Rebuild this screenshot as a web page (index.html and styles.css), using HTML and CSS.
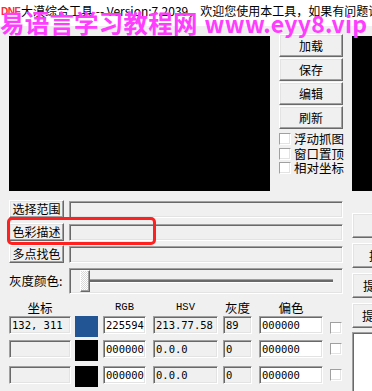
FILE: index.html
```html
<!DOCTYPE html>
<html lang="zh-CN">
<head>
<meta charset="utf-8">
<title>大漠综合工具</title>
<link rel="stylesheet" href="styles.css">
</head>
<body>
<div class="window">
  <div class="titlebar">
    <span class="app-icon">DNF</span>
    <span class="title">大漠综合工具 -- Version:7.2039，欢迎您使用本工具，如果有问题请联系作者</span>
    <div class="watermark"><span class="wm-cn">易语言学习教程网</span><span class="wm-en">www.eyy8.vip</span></div>
  </div>

  <div class="client">
    <div class="top">
      <div class="canvas"></div>
      <div class="side">
        <button class="btn side-btn">加载</button>
        <button class="btn side-btn">保存</button>
        <button class="btn side-btn">编辑</button>
        <button class="btn side-btn">刷新</button>
        <div class="checks">
          <label class="check"><span class="box"></span>浮动抓图</label>
          <label class="check"><span class="box"></span>窗口置顶</label>
          <label class="check"><span class="box"></span>相对坐标</label>
        </div>
      </div>
      <div class="canvas canvas-right"></div>
    </div>

    <div class="bottom">
      <div class="left">
        <div class="row"><button class="btn row-btn">选择范围</button><div class="field wide"></div></div>
        <div class="row"><button class="btn row-btn">色彩描述</button><div class="field wide"></div></div>
        <div class="row"><button class="btn row-btn">多点找色</button><div class="field wide"></div></div>
        <div class="slider-row">
          <span class="slider-label">灰度颜色:</span>
          <div class="slider"><span class="thumb"></span><span class="track"></span></div>
        </div>

        <div class="table">
          <div class="hd col-coord">坐标</div>
          <div class="hd col-swatch"></div>
          <div class="hd hd-latin col-rgb">RGB</div>
          <div class="hd hd-latin col-hsv">HSV</div>
          <div class="hd col-gray">灰度</div>
          <div class="hd col-bias">偏色</div>
          <div class="hd col-chk"></div>

          <div class="field ro col-coord">132, 311</div>
          <div class="swatch col-swatch swatch-blue"></div>
          <div class="field col-rgb">225594</div>
          <div class="field ro col-hsv">213.77.58</div>
          <div class="field ro col-gray">89</div>
          <div class="field col-bias">000000</div>
          <div class="box col-chk cell-chk first-chk"></div>

          <div class="field ro col-coord"></div>
          <div class="swatch col-swatch"></div>
          <div class="field col-rgb">000000</div>
          <div class="field ro col-hsv">0.0.0</div>
          <div class="field ro col-gray">0</div>
          <div class="field col-bias">000000</div>
          <div class="box col-chk cell-chk"></div>

          <div class="field ro col-coord"></div>
          <div class="swatch col-swatch"></div>
          <div class="field col-rgb">000000</div>
          <div class="field ro col-hsv">0.0.0</div>
          <div class="field ro col-gray">0</div>
          <div class="field col-bias">000000</div>
          <div class="box col-chk cell-chk"></div>
        </div>
      </div>

      <div class="right">
        <button class="btn rbtn rbtn-1">取色</button>
        <button class="btn rbtn rbtn-2">提取坐标</button>
        <button class="btn rbtn rbtn-3">提取颜色</button>
        <button class="btn rbtn rbtn-4">提取描述</button>
        <div class="field listbox"></div>
      </div>
    </div>
  </div>

  <div class="highlight"></div>
</div>
</body>
</html>
```

FILE: styles.css
```css
* { box-sizing: border-box; }

html, body {
  margin: 0;
  padding: 0;
  overflow: hidden;
}

body {
  width: 372px;
  height: 391px;
  background: #f0f0f0;
  font-family: "Noto Sans CJK SC", sans-serif;
  font-size: 12px;
  color: #000;
}

.window {
  position: relative;
  width: 372px;
  height: 391px;
  overflow: hidden;
}

/* ---------- title bar ---------- */
.titlebar {
  position: relative;
  height: 26px;
  background: #fff;
  display: flex;
  align-items: flex-start;
  padding-top: 3px;
  white-space: nowrap;
}

.app-icon {
  width: 20px;
  margin-left: 1px;
  margin-top: 3px;
  font: bold 10px/11px "Liberation Sans", sans-serif;
  color: #ff2a2a;
  letter-spacing: -0.5px;
}

.title {
  margin-left: 1px;
  font-size: 12px;
  line-height: 16px;
}

.watermark {
  position: absolute;
  left: 0;
  top: 10px;
  display: flex;
  align-items: baseline;
  color: #ff3dff;
  font-family: "Noto Sans CJK SC", sans-serif;
  font-weight: bold;
  white-space: nowrap;
  line-height: 26px;
}

.wm-cn {
  font-size: 24.5px;
  letter-spacing: 0.2px;
}

.wm-en {
  font-size: 23px;
  margin-left: 7px;
  letter-spacing: 0.3px;
}

/* ---------- client ---------- */
.client {
  padding: 8px 0 0 9px;
}

.top {
  display: flex;
  height: 157px;
}

.canvas {
  width: 261px;
  height: 155px;
  margin-top: 2px;
  background: #000;
  flex: none;
}

.canvas-right {
  width: 40px;
  margin-left: 9px;
}

.side {
  width: 64px;
  margin-left: 9px;
  display: flex;
  flex-direction: column;
  flex: none;
}

.btn {
  background: #f0f0f0;
  border: 1px solid;
  border-color: #fff #696969 #696969 #fff;
  box-shadow: inset -1px -1px 0 #a0a0a0, inset 1px 1px 0 #e3e3e3;
  font: 12px/14px "Noto Sans CJK SC", sans-serif;
  color: #000;
  display: flex;
  align-items: center;
  justify-content: center;
  padding: 0;
  margin: 0;
  white-space: nowrap;
}

.side-btn {
  height: 23px;
  margin-bottom: 1px;
}

.checks {
  margin-top: 2px;
}

.check {
  display: flex;
  align-items: center;
  height: 14.5px;
  font-size: 12.5px;
  line-height: 14px;
  white-space: nowrap;
}

.box {
  width: 12px;
  height: 12px;
  flex: none;
  background: #fff;
  border: 1px solid;
  border-color: #a0a0a0 #fff #fff #a0a0a0;
  box-shadow: inset -1px -1px 0 #e3e3e3;
}

.check .box {
  margin-right: 3px;
}

/* ---------- lower area ---------- */
.bottom {
  display: flex;
  margin-top: 9px;
}

.left {
  width: 334px;
  flex: none;
  display: flex;
  flex-direction: column;
}

.row {
  display: flex;
  height: 18px;
  margin-bottom: 4.5px;
}

.row-btn {
  width: 55px;
  height: 18px;
}

.field {
  background: #fff;
  border: 1px solid;
  border-color: #a0a0a0 #fff #fff #a0a0a0;
  box-shadow: inset 1px 1px 0 #696969, inset -1px -1px 0 #e3e3e3;
  font: 10.5px/16px "DejaVu Sans Mono", monospace;
  padding-left: 2px;
  white-space: nowrap;
  overflow: hidden;
}

.field.ro,
.wide {
  background: #f0f0f0;
}

.wide {
  width: 274px;
  height: 17px;
  margin: 1px 0 0 5px;
}

.slider-row {
  display: flex;
  align-items: center;
  height: 26px;
}

.slider-label {
  width: 60px;
  white-space: nowrap;
  font-size: 12.5px;
}

.slider {
  width: 274px;
  height: 26px;
  display: flex;
  align-items: center;
  padding: 0 9px 0 10px;
  border: 1px solid;
  border-color: #a0a0a0 #fff #fff #a0a0a0;
  box-shadow: inset 1px 1px 0 #696969, inset -1px -1px 0 #e3e3e3;
}

.thumb {
  width: 10px;
  height: 22px;
  flex: none;
  border: 1px solid;
  border-color: #fff #696969 #696969 #fff;
  box-shadow: inset -1px -1px 0 #a0a0a0;
  background: repeating-conic-gradient(#ffffff 0 25%, #d8d8d8 0 50%) 0 0 / 2px 2px;
}

.track {
  flex: 1;
  height: 2px;
  box-sizing: content-box;
  border-top: 1px solid #a0a0a0;
  border-bottom: 1px solid #fff;
  background: #696969;
}

/* ---------- table ---------- */
.table {
  display: grid;
  grid-template-columns: 66px 28px 50px 70px 36px 71px 12px;
  grid-template-rows: 16px 24px 26px 25px;
  align-items: start;
  margin-top: 6.5px;
}

.hd {
  height: 16px;
  text-align: center;
  font-size: 12.5px;
  line-height: 16px;
}

.hd-latin {
  font: 10.5px/14px "Liberation Mono", monospace;
}

.col-coord { width: 62px; }
.col-swatch { width: 23px; }
.col-rgb { width: 43px; }
.col-hsv { width: 65px; }
.col-gray { width: 29px; }
.col-bias { width: 64px; }
.col-chk { width: 12px; }

.table .field {
  height: 18px;
}

.swatch {
  height: 21px;
  background: #000;
}

.swatch-blue {
  background: #225594;
}

.cell-chk {
  margin-top: 3px;
}

.first-chk {
  margin-top: 6px;
}

/* ---------- right column ---------- */
.right {
  width: 40px;
  margin-left: 9px;
  padding-top: 13px;
  display: flex;
  flex-direction: column;
  flex: none;
}

.rbtn {
  width: 100px;
  height: 25px;
  margin-bottom: 5px;
  justify-content: flex-start;
  font-size: 12.5px;
}

.rbtn-1 { padding-left: 30px; }
.rbtn-2 { padding-left: 16px; }
.rbtn-3 { padding-left: 10px; }
.rbtn-4 { padding-left: 9px; }

.listbox {
  width: 60px;
  height: 70px;
  margin-top: -1px;
}

/* ---------- annotation ---------- */
.highlight {
  position: absolute;
  left: 7px;
  top: 217px;
  width: 149px;
  height: 28px;
  border: 3px solid #ff2020;
  border-radius: 5px;
}
```
